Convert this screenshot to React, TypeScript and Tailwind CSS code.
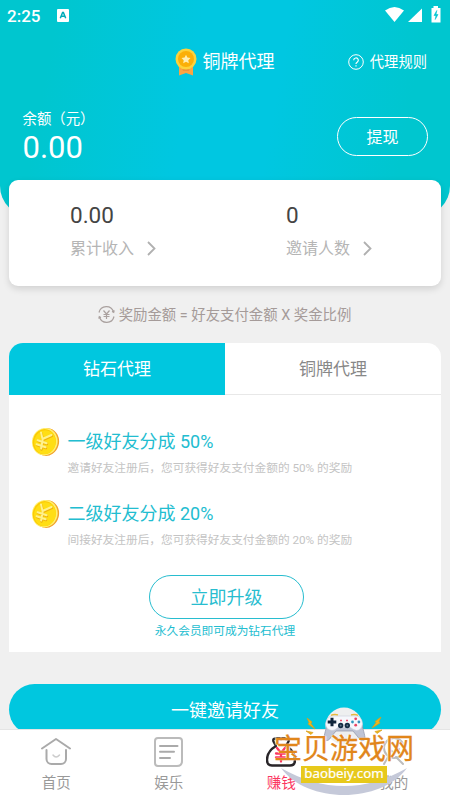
import React, { useState } from "react";

const TIERS = [
  { title: "一级好友分成 50%", desc: "邀请好友注册后，您可获得好友支付金额的 50% 的奖励" },
  { title: "二级好友分成 20%", desc: "间接好友注册后，您可获得好友支付金额的 20% 的奖励" },
];

const STATS = [
  { value: "0.00", label: "累计收入" },
  { value: "0", label: "邀请人数" },
];

const AGENT_TABS = ["钻石代理", "铜牌代理"];

function StatusBar() {
  return (
    <div className="flex h-8 items-center pl-[7px] pr-2">
      <span className="text-[17px] font-medium leading-8">2:25</span>
      <svg className="ml-[17px] -mt-[2px]" width="12" height="13" viewBox="0 0 12 13">
        <rect width="12" height="13" rx="1" fill="#fff" />
        <path d="M3.3 9.3 5.6 3.4h.8l2.3 5.9M4.2 7.3h3.6" fill="none" stroke="#00abb8" strokeWidth="1.5" />
      </svg>
      <svg className="ml-auto -mt-[2px]" width="58" height="18" viewBox="0 0 58 18">
        <path d="M1 4.600Q10.500-2.600 20 4.600L10.500 16z" fill="#fff" />
        <path d="M24 16 38 2.500V16z" fill="#fff" />
        <path d="M47.500 2h2V0h4.500v2h2.500v14.500h-9z" fill="#fff" />
        <path d="M52.800 4.500 50 9.500h2L51.200 13.500 54 8.500h-2z" fill="#00c6d2" stroke="#00c6d2" strokeWidth=".6" />
      </svg>
    </div>
  );
}

function Medal() {
  return (
    <svg className="-mt-px" width="22" height="28" viewBox="0 0 22 28">
      <path d="M4 18h14v9.500l-7-2.500-7 2.500z" fill="#fba443" />
      <path d="M7 20h8l-1 3H8z" fill="#f0913a" />
      <circle cx="11" cy="11" r="10.500" fill="#fcd23c" />
      <circle cx="11" cy="11" r="8" fill="#fbaf08" />
      <path d="m11 6.700 1.400 2.800 3.100.5-2.200 2.200.5 3.100-2.800-1.500-2.800 1.500.5-3.100L6.500 10l3.100-.5z" fill="#ffeeb4" />
    </svg>
  );
}

function Coin() {
  return (
    <svg className="-ml-px shrink-0" width="29" height="30" viewBox="0 0 29 30">
      <ellipse cx="15.500" cy="15" rx="12.500" ry="14" transform="rotate(14 15.500 15)" fill="#f2a22b" />
      <ellipse cx="13.800" cy="14.700" rx="12.800" ry="13.800" transform="rotate(14 13.800 14.700)" fill="#fff070" />
      <ellipse cx="13.300" cy="14.700" rx="11.500" ry="12.700" transform="rotate(14 13.300 14.700)" fill="#fccb05" />
      <ellipse cx="14" cy="15.200" rx="10.800" ry="11.900" transform="rotate(14 14 15.200)" fill="#ffde14" />
      <g fill="none" strokeLinecap="round">
        <path d="m10.500 6.500 1.500 6.500 9-4M12 14l-1.500 8.500M7 14l9 3M6 18l9 3" stroke="#f0b30c" strokeWidth="2.400" />
        <path d="m10 5.500 1.500 6.500 9-4M11.600 13l-1.500 8.500M6.600 13.200l9 3M5.600 17.200l9 3" stroke="#fff28c" strokeWidth="2" />
      </g>
    </svg>
  );
}

function Chevron() {
  return (
    <svg width="9" height="15" viewBox="0 0 9 15">
      <path d="m1 1 6.500 6.500L1 14" fill="none" stroke="#b0b0b0" strokeWidth="1.800" />
    </svg>
  );
}

function HomeIcon() {
  return (
    <svg width="30" height="30" viewBox="0 0 30 30" fill="none" stroke="#aaa" strokeWidth="2" strokeLinecap="round" strokeLinejoin="round">
      <path d="M1 11.500 15 2l14 9.500M5.500 13v9a5 5 0 0 0 5 5H20a5 5 0 0 0 5-5v-9" />
      <path d="M12 18q3 4 6.500 0" stroke="#ccc" strokeWidth="1.500" />
    </svg>
  );
}

function NewsIcon() {
  return (
    <svg width="30" height="30" viewBox="0 0 30 30" fill="none" stroke="#aaa" strokeWidth="2" strokeLinecap="round" strokeLinejoin="round">
      <path d="M4 1h21a3 3 0 0 1 3 3v20q0 5-5 5H4a3 3 0 0 1-3-3V4a3 3 0 0 1 3-3z" stroke="#bbb" />
      <path d="M6 9h17.500M6 14.800h14M6 21h10" />
    </svg>
  );
}

function BagIcon() {
  return (
    <svg width="30" height="30" viewBox="0 0 30 30" fill="none" strokeLinecap="round" strokeLinejoin="round">
      <path d="M10 9 7.500 4.500Q6.500 1 10 2q2.500-2 5 0 2.500-2 5 0 3.500-1 2.500 2.500L20 9c6 3.500 9 9 9 14q0 5.500-5 5.500H6q-5 0-5-5.500c0-5 3-10.500 9-14z" stroke="#292529" strokeWidth="2.400" />
      <path d="m11 11 4 5 4-5M15 16v8.500M10 16.500h10M10 20.500h10" stroke="#fb365f" strokeWidth="2.300" />
    </svg>
  );
}

function MineIcon() {
  return (
    <svg width="30" height="30" viewBox="0 0 30 30" fill="none" stroke="#bdbdbd" strokeWidth="2" strokeLinecap="round">
      <circle cx="15" cy="11" r="10" />
      <path d="M9 20 5 27M17 20l7 7M10 12q5 6 10 0" />
    </svg>
  );
}

const NAV = [
  { label: "首页", icon: HomeIcon },
  { label: "娱乐", icon: NewsIcon },
  { label: "赚钱", icon: BagIcon },
  { label: "我的", icon: MineIcon },
];

function SiteBadge() {
  return (
    <div className="pointer-events-none absolute left-[274px] top-[704px] h-[94px] w-[142px]">
      <svg className="absolute inset-0" width="142" height="94" viewBox="0 0 142 94">
        <path d="M7 64q63 36 126 0c-26 36-100 36-126 0z" fill="#c5c9d9" />
        <circle cx="70" cy="22" r="18.500" fill="#eeeff0" />
        <path d="M57 11.500q3-1.500 7-.5M77 11q4-1 7 .5" stroke="#e7b93a" strokeWidth="1.500" fill="none" />
        <path d="M53 21h35c1 5 4 12 2.500 15q-4 2-6.500-3l-5-6H62l-5 6q-2.500 5-6.500 3C49 33 52 26 53 21z" fill="#bfc4d5" stroke="#8e94a7" strokeWidth=".7" />
        <path d="M58 12h25q5 1 5.500 8-1 6-6 6.500-4-1-6-3H64q-3 3-6 3-6-1-6.500-6.500 1-7 6.500-8z" fill="#f6f7fc" stroke="#c9cdda" strokeWidth=".6" />
        <path d="M58 13.700v8.600M53.700 18h8.600" stroke="#10243b" strokeWidth="3" />
        <circle cx="66.700" cy="21.500" r="2.700" fill="#142b43" />
        <circle cx="73.300" cy="21.500" r="2.700" fill="#142b43" />
        <circle cx="66.700" cy="21.500" r=".9" fill="#60768b" />
        <circle cx="73.300" cy="21.500" r=".9" fill="#60768b" />
        <circle cx="81.700" cy="14.800" r="1.400" fill="#e94363" />
        <circle cx="81.700" cy="21.200" r="1.400" fill="#e94363" />
        <circle cx="78.500" cy="18" r="1.400" fill="#3296bd" />
        <circle cx="84.900" cy="18" r="1.400" fill="#368fbd" />
        <path d="M66 16.500h2M72 16.500h2" stroke="#f05170" strokeWidth="1.300" />
        <path d="m33 14 5 4-1 1.500 4 5.500-7-5 1-1.500zM107 13l-6 4.500 1 1-4 5.500 8-5-1-1.500zM32 27l7 1.500-2 2zM108 26l-7 1.500 2 2z" fill="#edb51f" stroke="#d89d17" strokeWidth=".7" />
      </svg>
      <div className="absolute left-0 top-[29px] whitespace-nowrap text-[28px] leading-[34px] text-[#e1861b] [-webkit-text-stroke:0.3px_#e1861b] [text-shadow:0_0_1px_#fff,1px_0_1px_#fff,-1px_0_1px_#fff]">宝贝游戏网</div>
      <div className="absolute left-[27px] top-[62px] flex h-[17px] w-[86px] items-center justify-center bg-[#e7c91b] pb-[2px] font-['Noto_Sans'] text-[13.300px] leading-[15px] text-white [-webkit-text-stroke:0.2px_#fff]">baobeiy.com</div>
    </div>
  );
}

export default function App() {
  const [tab, setTab] = useState(0);
  const [page, setPage] = useState(2);

  return (
    <main className="relative flex h-[800px] w-[450px] flex-col overflow-hidden bg-[#f0f0f0] font-[Roboto,'Noto_Sans_CJK_SC',sans-serif]">
      <header className="h-[216px] shrink-0 rounded-b-[30px] bg-[linear-gradient(100deg,#00c6cf_12%,#00c7e1_42%,#00c7e1_60%,#00c6cf_88%)] text-white">
        <StatusBar />
        <div className="grid h-[60px] grid-cols-[1fr_auto_1fr] items-center">
          <div />
          <div className="flex items-center gap-[6px] pr-px">
            <Medal />
            <h1 className="text-[18px] leading-7">铜牌代理</h1>
          </div>
          <div className="flex items-center justify-end gap-[6px] pr-[23px] pt-px text-[14.300px]">
            <svg className="-mt-px" width="16" height="16" viewBox="0 0 16 16" fill="none" stroke="#fff">
              <circle cx="8" cy="8" r="7.300" />
              <path d="M5.700 6.300a2.300 2.300 0 1 1 3.500 1.900Q8 8.900 8 10M8 11.200v1.200" strokeWidth="1.200" />
            </svg>
            代理规则
          </div>
        </div>
        <div className="flex justify-between pl-[22.500px] pr-[22px] pt-[16px]">
          <div>
            <div className="pt-px text-[14.400px] leading-[22px]">余额（元）</div>
            <div className="text-[31px] leading-[34px]">0.00</div>
          </div>
          <button className="mt-[9px] h-[39px] w-[91px] rounded-full border-[1.500px] border-white pt-[2px] text-[16px]">提现</button>
        </div>
      </header>

      <section className="relative mx-[9px] -mt-[36px] grid h-[106px] shrink-0 grid-cols-2 rounded-[9px] bg-white shadow-[0_3px_7px_rgba(0,0,0,0.13)]">
        {STATS.map((s) => (
          <div key={s.label} className="pl-[61px] pt-[21px]">
            <div className="text-[22.500px] leading-7 text-[#444]">{s.value}</div>
            <div className="mt-[7px] flex items-center gap-[13px] text-[16px] leading-6 text-[#b5b5b5]">
              <span className="pt-px">{s.label}</span>
              <Chevron />
            </div>
          </div>
        ))}
      </section>

      <div className="flex h-[57px] shrink-0 items-center justify-center gap-1 pr-px text-[14.400px] text-[#a59b99]">
        <svg width="17" height="17" viewBox="0 0 17 17" fill="none" stroke="#aaa19f" strokeWidth="1.200">
          <path d="M1 6.500A7.500 7.500 0 0 1 15.500 6M16 10.500A7.500 7.500 0 0 1 1.500 11M14 5.500l1.700.8.500-2M3 11.500l-1.700-.8-.5 2M5.500 4.500l3 3.500 3-3.500M8.500 8v5M5.500 8.500h6M5.500 10.500h6" />
        </svg>
        <span className="pt-[2px]">奖励金额 = 好友支付金额 X 奖金比例</span>
      </div>

      <section className="mx-[9px] h-[309px] shrink-0 overflow-hidden rounded-t-[14px] bg-white">
        <div className="grid h-[52px] grid-cols-2">
          {AGENT_TABS.map((name, i) => (
            <button
              key={name}
              onClick={() => setTab(i)}
              className={tab === i ? "bg-[#00c7df] pt-[2px] text-[17px] text-white" : "border-b border-[#e8e8e8] pt-[2px] text-[17px] text-[#888]"}
            >
              {name}
            </button>
          ))}
        </div>
        <div className="flex flex-col gap-[22px] pl-[23px] pt-[32px]">
          {TIERS.map((t) => (
            <div key={t.title} className="flex gap-[7.500px]">
              <Coin />
              <div>
                <div className="pt-px text-[18px] leading-[28px] text-[#22bdd0]">{t.title}</div>
                <div className="mt-[3px] whitespace-nowrap text-[11.700px] leading-[18px] text-[#c4c4c4]">{t.desc}</div>
              </div>
            </div>
          ))}
        </div>
        <div className="mt-[26px] flex flex-col items-center">
          <button className="ml-[3px] h-[44px] w-[155px] rounded-full border-[1.500px] border-[#28bdcf] text-[18px] text-[#28bdcf]">立即升级</button>
          <div className="mt-[3px] text-[11.700px] leading-[18px] text-[#22bdd0]">永久会员即可成为钻石代理</div>
        </div>
      </section>

      <button className="mx-[9px] mt-[32px] h-[51px] shrink-0 rounded-full bg-[#00c7df] pt-px text-[18px] text-white">一键邀请好友</button>

      <nav className="relative -mt-[6px] grid h-[71px] shrink-0 grid-cols-4 border-t border-[#e5e5e5] bg-white">
        {NAV.map(({ label, icon: Icon }, i) => (
          <button key={label} onClick={() => setPage(i)} className="flex flex-col items-center pt-[7px]">
            <Icon />
            <span className={page === i ? "mt-[6px] text-[14.500px] leading-[22px] text-[#fb365f]" : "mt-[6px] text-[14.500px] leading-[22px] text-[#999]"}>{label}</span>
          </button>
        ))}
      </nav>

      <SiteBadge />
    </main>
  );
}
